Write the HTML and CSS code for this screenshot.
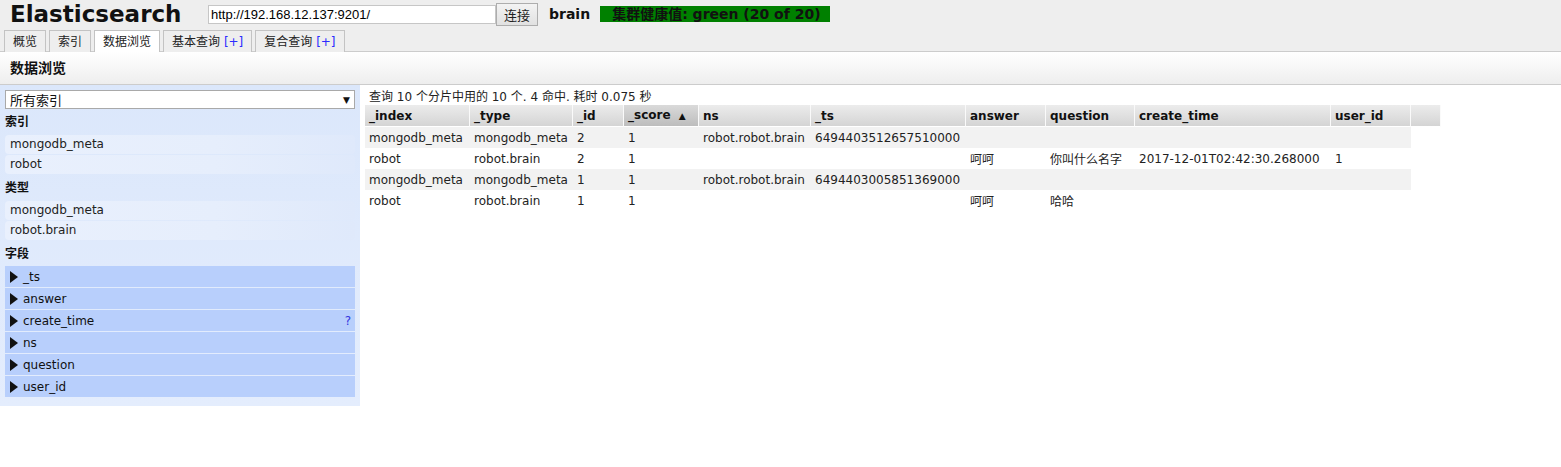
FILE: index.html
```html
<!DOCTYPE html>
<html lang="zh">
<head>
<meta charset="utf-8">
<title>Elasticsearch</title>
<link rel="stylesheet" href="styles.css">
</head>
<body>
<div class="header">
  <div class="top-row">
    <div class="logo">Elasticsearch</div>
    <input class="url" type="text" value="http://192.168.12.137:9201/">
    <button class="connect">连接</button>
    <span class="cluster">brain</span>
    <span class="health">集群健康值: green (20 of 20)</span>
  </div>
  <div class="tabs">
    <div class="tab">概览</div>
    <div class="tab">索引</div>
    <div class="tab active">数据浏览</div>
    <div class="tab">基本查询 <span class="plus">[+]</span></div>
    <div class="tab">复合查询 <span class="plus">[+]</span></div>
  </div>
</div>
<div class="subheader">数据浏览</div>
<div class="main">
  <div class="sidebar">
    <div class="select"><span>所有索引</span><span class="arrow">▼</span></div>
    <div class="heading">索引</div>
    <div class="item">mongodb_meta</div>
    <div class="item">robot</div>
    <div class="heading">类型</div>
    <div class="item">mongodb_meta</div>
    <div class="item">robot.brain</div>
    <div class="heading">字段</div>
    <div class="fields">
      <div class="field"><span class="tri"></span><span class="fname">_ts</span></div>
      <div class="field"><span class="tri"></span><span class="fname">answer</span></div>
      <div class="field"><span class="tri"></span><span class="fname">create_time</span><span class="help">?</span></div>
      <div class="field"><span class="tri"></span><span class="fname">ns</span></div>
      <div class="field"><span class="tri"></span><span class="fname">question</span></div>
      <div class="field"><span class="tri"></span><span class="fname">user_id</span></div>
    </div>
  </div>
  <div class="content">
    <div class="summary">查询 10 个分片中用的 10 个. 4 命中. 耗时 0.075 秒</div>
    <table class="results">
      <thead>
        <tr>
          <th class="c-index">_index</th>
          <th class="c-type">_type</th>
          <th class="c-id">_id</th>
          <th class="c-score sorted">_score <span class="up">▲</span></th>
          <th class="c-ns">ns</th>
          <th class="c-ts">_ts</th>
          <th class="c-answer">answer</th>
          <th class="c-question">question</th>
          <th class="c-ctime">create_time</th>
          <th class="c-uid">user_id</th>
          <th class="c-extra"></th>
        </tr>
      </thead>
      <tbody>
        <tr>
          <td>mongodb_meta</td><td>mongodb_meta</td><td>2</td><td>1</td><td>robot.robot.brain</td><td>6494403512657510000</td><td></td><td></td><td></td><td></td>
        </tr>
        <tr>
          <td>robot</td><td>robot.brain</td><td>2</td><td>1</td><td></td><td></td><td>呵呵</td><td>你叫什么名字</td><td>2017-12-01T02:42:30.268000</td><td>1</td>
        </tr>
        <tr>
          <td>mongodb_meta</td><td>mongodb_meta</td><td>1</td><td>1</td><td>robot.robot.brain</td><td>6494403005851369000</td><td></td><td></td><td></td><td></td>
        </tr>
        <tr>
          <td>robot</td><td>robot.brain</td><td>1</td><td>1</td><td></td><td></td><td>呵呵</td><td>哈哈</td><td></td><td></td>
        </tr>
      </tbody>
    </table>
  </div>
</div>
</body>
</html>
```
FILE: styles.css
```css
* { box-sizing: border-box; }
html, body { margin: 0; padding: 0; background: #fff; }
body {
  font-family: "DejaVu Sans", "Noto Sans CJK SC", sans-serif;
  font-size: 12px;
  color: #222;
}

.header { background: #eee; }
.top-row {
  display: flex;
  align-items: center;
  height: 28px;
}
.logo {
  font-weight: bold;
  font-size: 23px;
  color: #111;
  margin-left: 10px;
  width: 198px;
  line-height: 28px;
}
.url {
  width: 288px;
  height: 19px;
  border: 1px solid #c6c6c6;
  background: #fff;
  font-family: "Liberation Sans", Arial, sans-serif;
  font-size: 13px;
  padding: 0 2px;
  margin: 0;
  color: #000;
}
.connect {
  width: 42px;
  height: 23px;
  margin: 0;
  border: 1px solid #adadad;
  background: linear-gradient(#f3f3f3, #e1e1e1);
  font-family: "Noto Sans CJK SC", sans-serif;
  font-size: 13px;
  color: #222;
  padding: 0;
}
.cluster {
  font-weight: bold;
  font-size: 14px;
  margin-left: 11px;
  color: #111;
}
.health {
  margin-left: 10px;
  background: #008000;
  color: #111;
  font-weight: bold;
  font-size: 14px;
  line-height: 16px;
  height: 16px;
  width: 230px;
  padding: 0 0 0 12px;
  white-space: nowrap;
  overflow: hidden;
}

.tabs {
  display: flex;
  gap: 3px;
  padding-left: 4px;
  margin-top: 2px;
  border-bottom: 1px solid #ccc;
  height: 22px;
}
.tab {
  height: 22px;
  padding: 0 8px;
  border: 1px solid #c3c3c3;
  border-bottom: none;
  background: #eee;
  line-height: 22px;
  font-size: 12px;
  color: #222;
  white-space: nowrap;
}
.tab.active {
  background: #fff;
  height: 22px;
  margin-bottom: -1px;
  padding-bottom: 1px;
}
.plus { color: #2b2bff; }

.subheader {
  height: 33px;
  background: linear-gradient(#ffffff, #eeeeee);
  border-bottom: 1px solid #ccc;
  font-weight: bold;
  font-size: 14px;
  line-height: 32px;
  padding-left: 10px;
  color: #111;
}

.main {
  display: flex;
  align-items: flex-start;
}
.sidebar {
  width: 360px;
  flex: none;
  padding: 5px 5px 9px 5px;
  background: linear-gradient(#dbe7fb, #e4edfd);
}
.select {
  display: flex;
  justify-content: space-between;
  align-items: center;
  height: 19px;
  background: #fff;
  border: 1px solid #a9a9a9;
  padding: 0 4px;
  font-size: 13px;
  color: #111;
}
.arrow { font-size: 9px; color: #111; }
.heading {
  font-weight: bold;
  font-size: 12px;
  line-height: 17px;
  padding: 5px 0 4px 0;
  color: #111;
}
.item {
  height: 19px;
  line-height: 19px;
  margin-bottom: 1px;
  padding-left: 5px;
  border-radius: 4px;
  background: linear-gradient(to right, #e9f0fd, #e6eefc 60%, #dfe9fb);
  font-size: 12px;
  color: #222;
}
.fields {
  display: flex;
  flex-direction: column;
  gap: 1px;
  margin-top: -1px;
}
.field {
  display: flex;
  align-items: center;
  height: 21px;
  background: #b8cffc;
  padding: 0 4px 0 5px;
}
.tri {
  width: 0;
  height: 0;
  border-left: 8px solid #111;
  border-top: 6px solid transparent;
  border-bottom: 6px solid transparent;
  margin-right: 5px;
}
.fname { flex: 1; color: #111; }
.help { color: #3434e0; font-size: 12px; }

.content {
  padding: 5px 0 0 5px;
}
.summary {
  line-height: 15px;
  padding-left: 4px;
  color: #222;
}
.results {
  border-collapse: separate;
  border-spacing: 0;
  table-layout: fixed;
  width: 1076px;
}
.results th {
  height: 21px;
  padding: 1px 4px 0 4px;
  text-align: left;
  font-weight: bold;
  font-size: 12px;
  color: #111;
  background: linear-gradient(#ececec, #d4d4d4);
  border-right: 1px solid #fafafa;
  border-bottom: 1px solid #fff;
  white-space: nowrap;
  overflow: hidden;
  line-height: 19px;
}
.results th.sorted { background: linear-gradient(#dadada, #bdbdbd); }
.up { font-size: 9px; margin-left: 4px; }
.results td {
  height: 21px;
  padding: 0 4px;
  white-space: nowrap;
  overflow: hidden;
  color: #222;
}
.results tbody tr:nth-child(odd) td { background: #f2f2f2; }
.results tbody tr:nth-child(even) td { background: #fff; }

.c-index { width: 105px; }
.c-type { width: 103px; }
.c-id { width: 51px; }
.c-score { width: 75px; }
.c-ns { width: 112px; }
.c-ts { width: 155px; }
.c-answer { width: 80px; }
.c-question { width: 89px; }
.c-ctime { width: 196px; }
.c-uid { width: 80px; }
.c-extra { width: 30px; }
```
